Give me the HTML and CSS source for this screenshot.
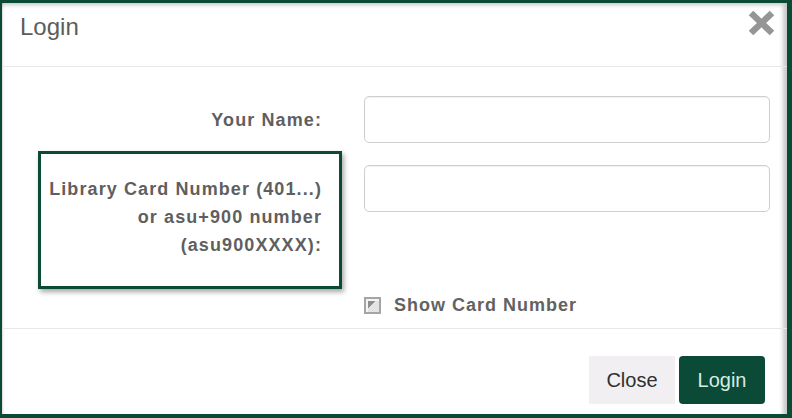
FILE: index.html
```html
<!DOCTYPE html>
<html>
<head>
<meta charset="utf-8">
<link rel="stylesheet" href="styles.css">
</head>
<body>
<div class="frame">
  <div class="modal">
    <div class="modal-header">
      <h4 class="title">Login</h4>
      <button class="close" aria-label="Close">
        <svg width="27" height="26" viewBox="0 0 27 26"><path d="M3 3 L24 23 M24 3 L3 23" stroke="#959595" stroke-width="6.5" stroke-linecap="butt"/></svg>
      </button>
    </div>
    <div class="modal-body">
      <div class="form">
        <label class="label">Your Name:</label>
        <input class="field" type="text">
        <label class="label highlight">Library Card Number (401...)<br>or asu+900 number<br>(asu900XXXX):</label>
        <input class="field" type="password">
        <div class="check-row">
          <span class="checkbox"></span>
          <span class="check-text">Show Card Number</span>
        </div>
      </div>
    </div>
    <div class="modal-footer">
      <button class="btn btn-close">Close</button>
      <button class="btn btn-login">Login</button>
    </div>
  </div>
</div>
</body>
</html>
```
FILE: styles.css
```css
html, body {
  margin: 0;
  padding: 0;
  background: #0b4a36;
}
.frame {
  width: 792px;
  height: 418px;
  box-sizing: border-box;
  border-style: solid;
  border-color: #0b4a36;
  border-width: 3px 5px 4px 2px;
  background: #0b4a36;
}
.modal {
  height: 411px;
  background: #fff;
  box-shadow: inset -5px 3px 4px -1px rgba(0,0,0,0.22), inset 2px 0 2px -1px rgba(0,0,0,0.15);
  font-family: "Liberation Sans", Arial, sans-serif;
  display: flex;
  flex-direction: column;
}
.modal-header {
  height: 64px;
  box-sizing: border-box;
  padding: 10px 12px 0 18px;
  border-bottom: 1px solid #e8e8e8;
  display: flex;
  justify-content: space-between;
  align-items: flex-start;
}
.title {
  margin: 0;
  font-size: 24px;
  font-weight: normal;
  color: #5c5c5c;
  line-height: 28px;
}
.close {
  border: 0;
  background: none;
  padding: 0;
  margin-top: -3px;
  width: 27px;
  height: 26px;
}
.close svg { display: block; }
.modal-body {
  height: 262px;
  box-sizing: border-box;
  padding: 29px 17px 0 36px;
  border-bottom: 1px solid #e8e8e8;
}
.form {
  display: grid;
  grid-template-columns: 304px 1fr;
  column-gap: 22px;
  row-gap: 22px;
}
.label {
  text-align: right;
  padding: 10px 20px 0 0;
  font-size: 18px;
  font-weight: bold;
  letter-spacing: 1.1px;
  line-height: 28px;
  color: #5f5f5f;
}
.highlight {
  position: relative;
}
.highlight::before {
  content: "";
  position: absolute;
  top: -14px;
  left: 0;
  right: 0;
  bottom: -30px;
  border: 3px solid #0b4a36;
  box-shadow: 2px 3px 5px rgba(0,0,0,0.35);
  pointer-events: none;
}
.field {
  height: 47px;
  box-sizing: border-box;
  border: 1px solid #cfcfcf;
  border-radius: 5px;
  box-shadow: inset 0 1px 1px rgba(0,0,0,0.06);
  align-self: start;
  margin: 0;
}
.check-row {
  grid-column: 2;
  display: flex;
  align-items: center;
  gap: 13px;
  padding-top: 12px;
  height: 24px;
}
.checkbox {
  width: 13px;
  height: 13px;
  border: 2px solid #a5a5a5;
  background: linear-gradient(135deg, #8e8e8e 0 45%, #e4e4e4 45% 100%);
  box-shadow: inset 2px 2px 0 #f4f4f4;
}
.check-text {
  font-size: 18px;
  font-weight: bold;
  letter-spacing: 1px;
  color: #626262;
}
.modal-footer {
  flex: 1;
  display: flex;
  justify-content: flex-end;
  align-items: flex-start;
  gap: 4px;
  padding: 27px 22px 0 0;
}
.btn {
  width: 86px;
  height: 48px;
  border: 0;
  border-radius: 4px;
  font-family: "Liberation Sans", Arial, sans-serif;
  font-size: 20px;
  padding: 0;
}
.btn-close {
  background: #f1eff1;
  color: #2f2f2f;
  border-radius: 0;
}
.btn-login {
  background: #0b4a36;
  color: #d6ece2;
}
```
